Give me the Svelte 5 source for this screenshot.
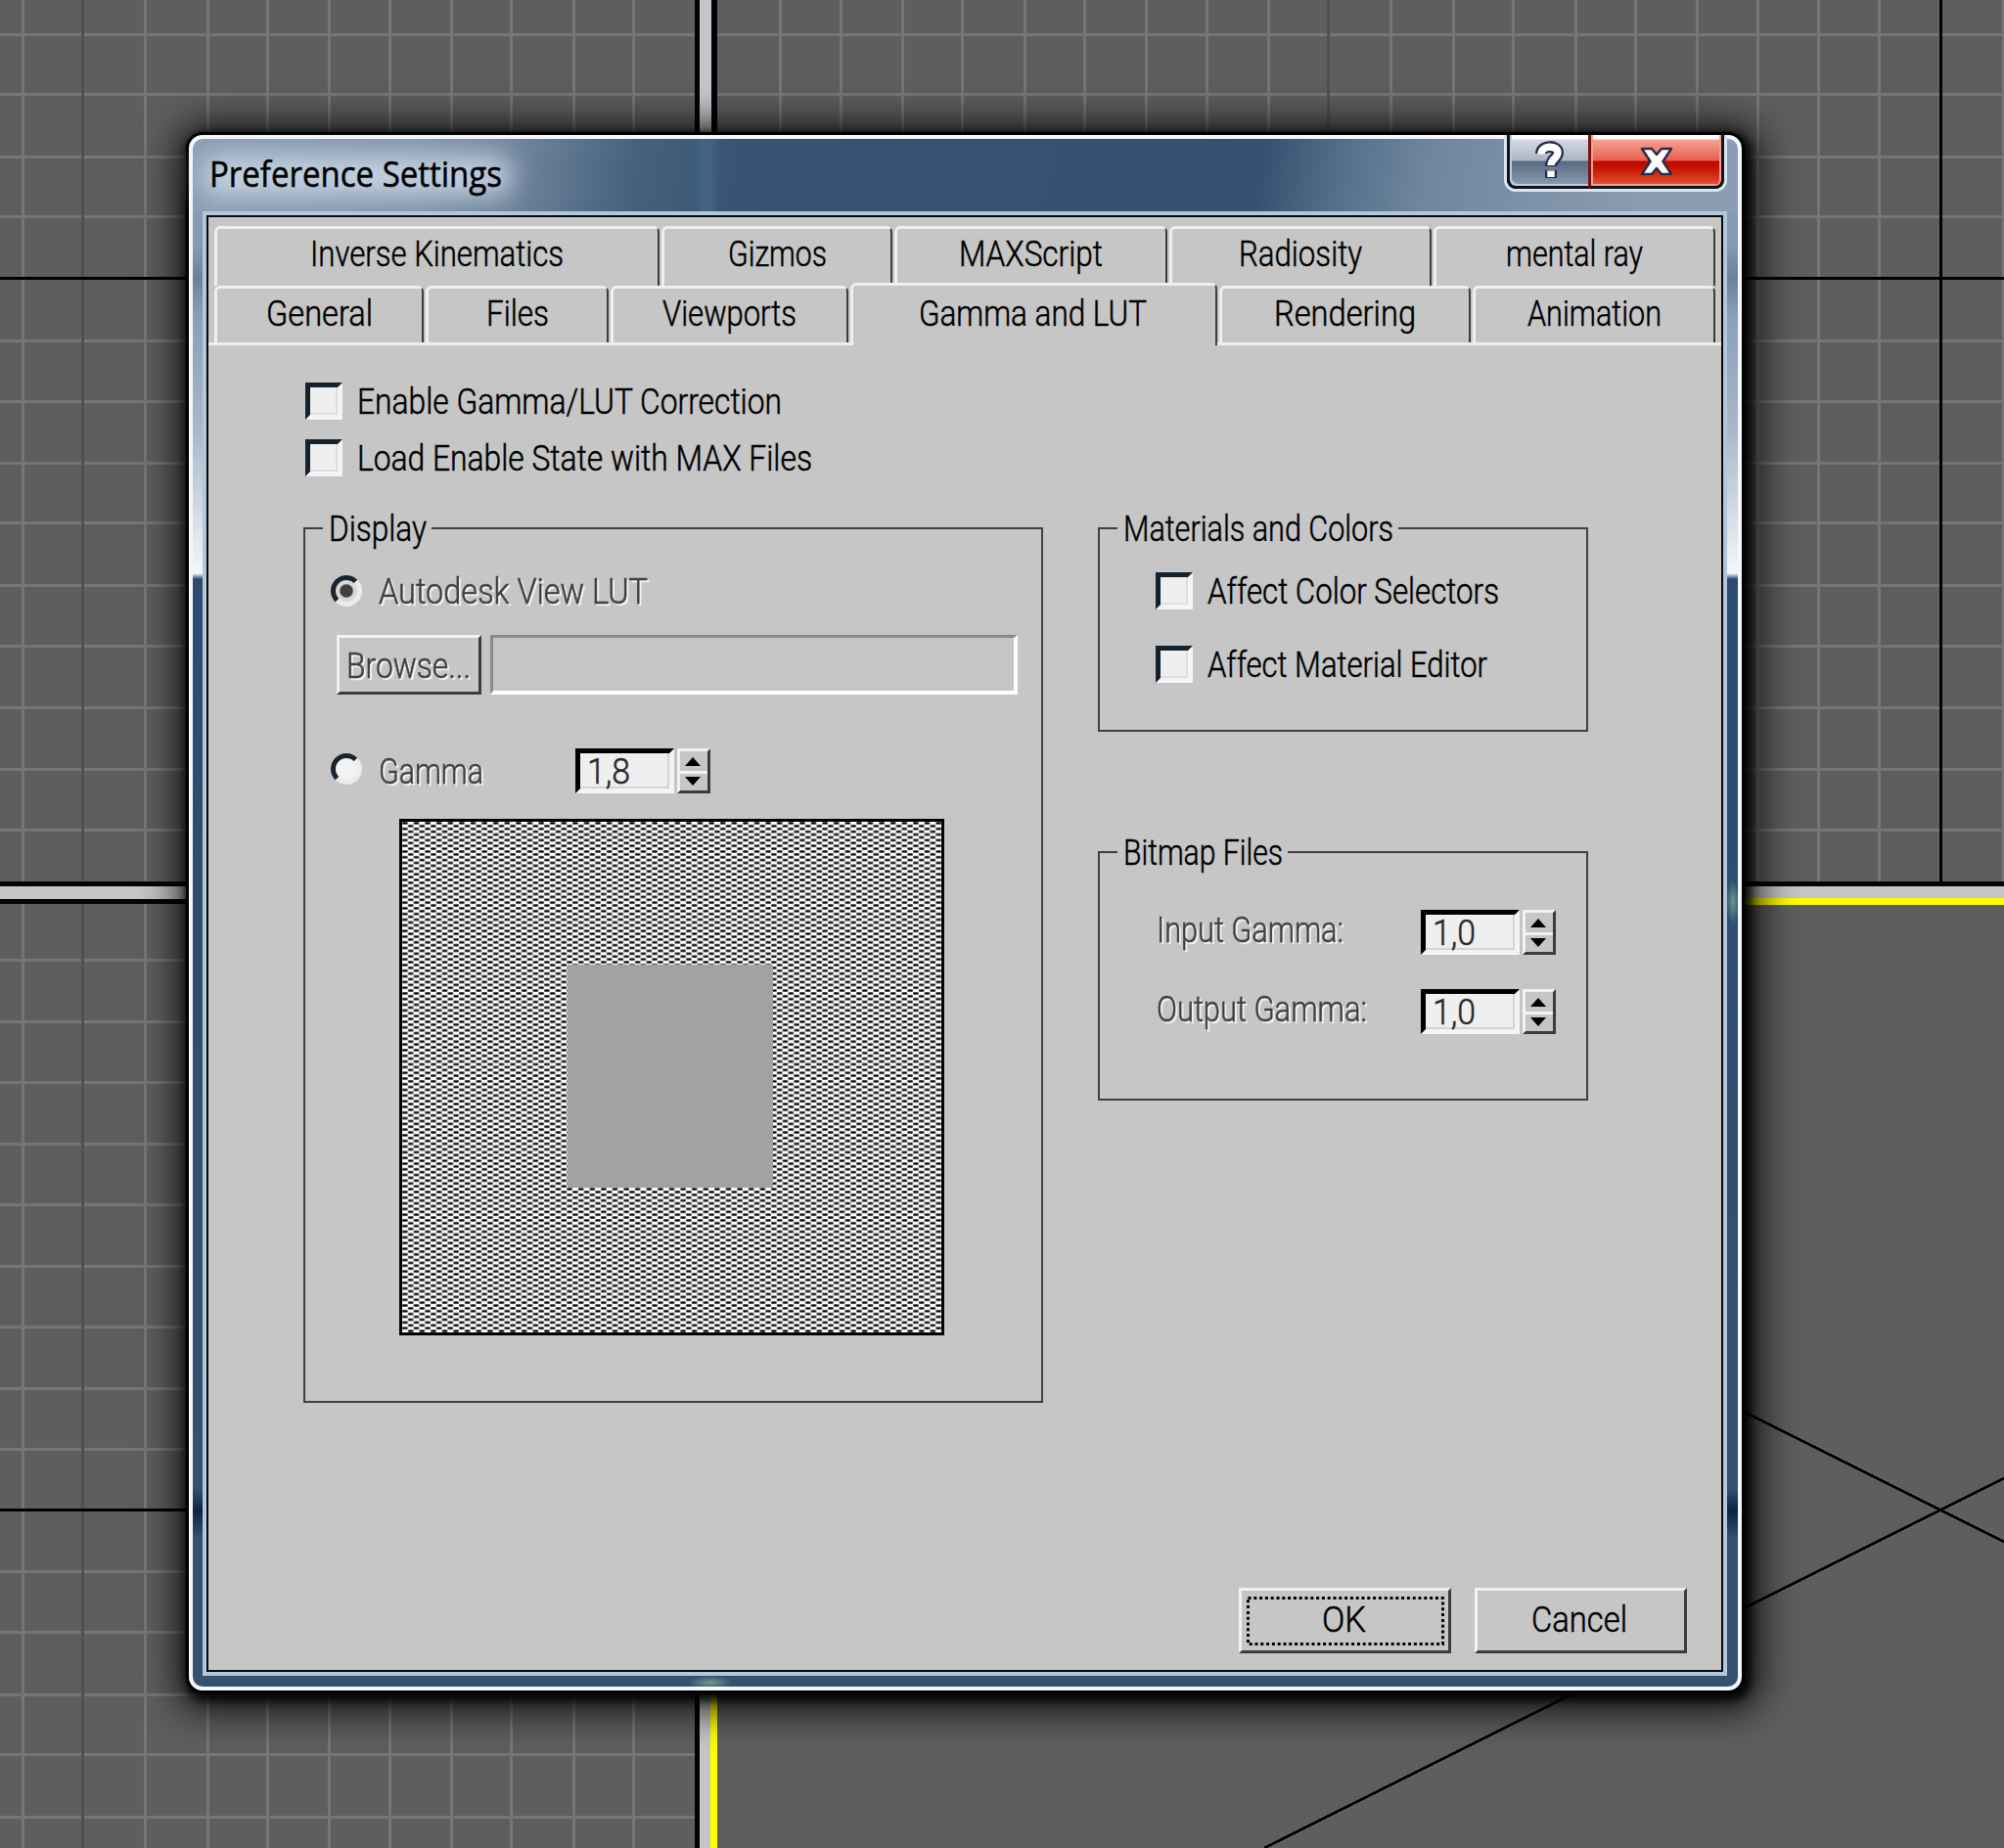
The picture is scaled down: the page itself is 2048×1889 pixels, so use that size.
<script>
    // grid lines of the orthographic viewports behind the dialog
    const gridX = [22, 147, 211, 272, 335, 397, 460, 521, 585, 646, 796, 858, 921, 982, 1046, 1107, 1170, 1232, 1295, 1420, 1484, 1545, 1609, 1670, 1733, 1795, 1857, 1919, 2046];
    const gridTop = [34, 95, 159, 220, 347, 409, 472, 533, 597, 659, 722, 785, 847];
    const gridBottom = [980, 1043, 1105, 1168, 1230, 1293, 1355, 1418, 1480, 1605, 1667, 1731, 1792, 1856];

    const backTabs = [
        { name: 'Inverse Kinematics', width: 455, text: 259 },
        { name: 'Gizmos', width: 236, text: 101 },
        { name: 'MAXScript', width: 279, text: 147 },
        { name: 'Radiosity', width: 268, text: 126 },
        { name: 'mental ray', width: 288, text: 140 },
    ];

    const frontTabs = [
        { name: 'General', width: 214, text: 109 },
        { name: 'Files', width: 187, text: 64 },
        { name: 'Viewports', width: 243, text: 137 },
        { name: 'Gamma and LUT', width: 375, text: 233 },
        { name: 'Rendering', width: 257, text: 145 },
        { name: 'Animation', width: 248, text: 137 },
    ];

    let activeTab = $state('Gamma and LUT');
    let display = $state('lut');
</script>

{#snippet label(text, width)}
    <svg class="label" {width} height="32">
        <text x="0" y="28.500" textLength={width} lengthAdjust="spacingAndGlyphs">{text}</text>
    </svg>
{/snippet}

{#snippet spinner(value)}
    <div class="spinner">
        <div class="number">{@render label(value, 44)}</div>
        <div class="arrows">
            <div class="arrow">
                <svg width="16" height="9"><path d="M8 0L16 9H0Z" /></svg>
            </div>
            <div class="arrow down">
                <svg width="16" height="9"><path d="M0 0H16L8 9Z" /></svg>
            </div>
        </div>
    </div>
{/snippet}

<div class="desktop">
    <svg class="viewports" width="2048" height="1889" shape-rendering="crispEdges">
        <rect width="2048" height="1889" fill="#5e5e5e" />
        {#each gridTop as y}
            <rect x="0" {y} width="2048" height="3" fill="#767676" />
        {/each}
        {#each gridBottom as y}
            <rect x="0" {y} width="710" height="3" fill="#767676" />
        {/each}
        {#each gridX as x}
            <rect {x} y="0" width="3" height={x < 710 ? 1889 : 904} fill="#767676" />
        {/each}
        <rect x="83" y="0" width="3" height="1889" fill="#505050" />
        <rect x="1356" y="0" width="3" height="904" fill="#505050" />
        <rect x="0" y="283" width="2048" height="3" />
        <rect x="0" y="1542" width="710" height="3" />
        <rect x="1982" y="0" width="3" height="904" />

        <path d="M2048 1511L1292 1889M1740 1422L2048 1576" stroke="#000" stroke-width="2.6" />

        <rect x="710" y="0" width="23" height="1889" fill="#00020a" />
        <rect x="0" y="901" width="2048" height="23" fill="#00020a" />
        <rect x="715" y="0" width="12" height="1889" fill="#c6c6c6" />
        <rect x="0" y="906" width="2048" height="13" fill="#c6c6c6" />
        <rect x="726" y="918" width="1322" height="7" fill="#ff0" />
        <rect x="726" y="918" width="7" height="971" fill="#ff0" />
    </svg>

    <div class="dialog">
        <header>
            <div class="title">
                <svg class="label" width="300" height="34">
                    <text x="0" y="29" textLength="299" lengthAdjust="spacingAndGlyphs">Preference Settings</text>
                </svg>
            </div>
            <div class="caption-buttons">
                <button class="help" aria-label="Help">
                    <svg width="30" height="40" viewBox="0 0 30 40">
                        <path class="outline" d="M7 13C7 4 24 4 24 12C24 18 17 18 17 26M17 30V38" />
                        <path class="glyph" d="M7 13.500C7 4 24 4 24 12C24 18 17 18 17 25M17 30.500V37" />
                    </svg>
                </button>
                <button class="close" aria-label="Close">
                    <svg width="36" height="30" viewBox="0 0 36 30">
                        <path class="shape" d="M3 3H13L18 9L23 3H33L24.500 16L33 29H23L18 23L13 29H3L11.500 16Z" />
                    </svg>
                </button>
            </div>
        </header>

        <div class="client">
            <div class="tabs">
                {#each backTabs as tab}
                    <button class="tab" style="width: {tab.width}px">{@render label(tab.name, tab.text)}</button>
                {/each}
            </div>
            <div class="tabs front">
                {#each frontTabs as tab}
                    <button class="tab" class:active={tab.name === activeTab} style="width: {tab.width}px" onclick={() => activeTab = tab.name}>{@render label(tab.name, tab.text)}</button>
                {/each}
            </div>

            <div class="page">
                <div class="options">
                    <div class="option"><span class="checkbox"></span>{@render label('Enable Gamma/LUT Correction', 434)}</div>
                    <div class="option"><span class="checkbox"></span>{@render label('Load Enable State with MAX Files', 465)}</div>
                </div>

                <div class="groups">
                    <fieldset class="display">
                        <legend>{@render label('Display', 100)}</legend>

                        <div class="radio disabled">
                            <span class="dot" class:checked={display === 'lut'}></span>
                            {@render label('Autodesk View LUT', 275)}
                        </div>

                        <div class="browse">
                            <button class="push disabled">{@render label('Browse...', 127)}</button>
                            <div class="path"></div>
                        </div>

                        <div class="gamma">
                            <div class="radio disabled">
                                <span class="dot" class:checked={display === 'gamma'}></span>
                                {@render label('Gamma', 107)}
                            </div>
                            {@render spinner('1,8')}
                        </div>

                        <div class="swatch">
                            <svg width="551" height="522">
                                <defs>
                                    <pattern id="dither" width="11.6" height="5.8" patternUnits="userSpaceOnUse">
                                        <rect width="11.6" height="5.8" fill="#fff" />
                                        <rect x="0.3" y="0.3" width="5.200" height="2.300" />
                                        <rect x="6.100" y="3.200" width="5.200" height="2.300" />
                                    </pattern>
                                </defs>
                                <rect width="551" height="522" fill="url(#dither)" />
                                <rect x="169" y="146" width="210" height="228" fill="#a2a2a2" />
                            </svg>
                        </div>
                    </fieldset>

                    <div class="column">
                        <fieldset class="materials">
                            <legend>{@render label('Materials and Colors', 276)}</legend>
                            <div class="option"><span class="checkbox"></span>{@render label('Affect Color Selectors', 298)}</div>
                            <div class="option"><span class="checkbox"></span>{@render label('Affect Material Editor', 286)}</div>
                        </fieldset>

                        <fieldset class="bitmap">
                            <legend>{@render label('Bitmap Files', 163)}</legend>
                            <div class="row disabled">
                                {@render label('Input Gamma:', 191)}
                                {@render spinner('1,0')}
                            </div>
                            <div class="row disabled">
                                {@render label('Output Gamma:', 215)}
                                {@render spinner('1,0')}
                            </div>
                        </fieldset>
                    </div>
                </div>
            </div>

            <footer>
                <button class="push default">
                    <svg class="focus" width="202" height="50"><rect x="1.500" y="1.500" width="199" height="47" /></svg>
                    {@render label('OK', 45)}
                </button>
                <button class="push">{@render label('Cancel', 98)}</button>
            </footer>
        </div>
    </div>
</div>

<style>
    :global(body) {
        margin: 0;
        overflow: hidden;
    }

    .desktop {
        position: relative;
        width: 2048px;
        height: 1889px;
        overflow: hidden;

        font-family: Roboto, "Liberation Sans", sans-serif;
        font-size: 36px;
        font-weight: 300;
    }

    .desktop * {
        box-sizing: border-box;
    }

    svg {
        display: block;
        flex: none;
    }

    .label {
        overflow: visible;
    }

    .label text {
        fill: #000;
        stroke: #000;
        stroke-width: 0.5;
    }

    button {
        padding: 0;
        border: none;
        border-radius: 0;
        background: none;
        font: inherit;
    }

    .dialog {
        position: absolute;
        left: 193px;
        top: 138px;
        width: 1587px;
        height: 1590px;

        border: 4px solid #f4f8fc;
        border-radius: 14px;
        background:
            radial-gradient(closest-side, #6d978c, #6d978c00) 1567px 757px / 14px 46px no-repeat,
            radial-gradient(closest-side, #6d978c, #6d978c00) 506px 1571px / 46px 14px no-repeat,
            linear-gradient(90deg, #41638400, #416384 8px, #416384 16px, #41638400) 512px 0 / 26px 74px no-repeat,
            linear-gradient(100deg, #8a9fb7, #8095ae 230px, #6f849c 330px, #45617d 450px, #365472 560px, #34526f 1080px, #52708c 1160px, #71869e 1250px, #8a9db2 1480px) top / 100% 74px no-repeat,
            linear-gradient(#8a9fb6 0, #8599b0 110px, #6c8098 142px, #8a9fb6 180px, #a9b8c9 300px, #eef3f7 435px, #f4f7fa 444px, #2b4c70 450px, #34516f 1380px, #0d2440 1402px, #34516f 1430px);
        box-shadow: 0 0 0 3px #000, 3px 4px 10px 6px rgba(0, 0, 0, 0.9), 4px 5px 38px 16px rgba(0, 0, 0, 0.8);
    }

    header {
        display: flex;
        align-items: flex-start;
        justify-content: space-between;
        height: 74px;
    }

    .title {
        position: relative;
        margin: 7px 0 0 2px;
        padding: 13px 24px 12px 15px;

        font-family: "Open Sans", "Noto Sans", sans-serif;
        font-weight: 400;
    }

    /* glow that keeps the caption readable on the glass */
    .title::before {
        content: "";
        position: absolute;
        inset: 10px 14px 8px 6px;
        border-radius: 20px;
        background: rgba(208, 219, 231, 0.85);
        filter: blur(13px);
    }

    .title .label {
        position: relative;
    }

    .caption-buttons {
        display: flex;
        height: 58px;
        margin: -4px 11px 0 0;

        border: 3px solid #dce6f0;
        border-top: none;
        border-radius: 0 0 12px 12px;
        background: #111;
    }

    .caption-buttons button {
        display: flex;
        align-items: center;
        justify-content: center;
        height: 55px;

        border: 3px solid #10131a;
        border-top: none;
    }

    .caption-buttons .help {
        width: 83px;
        border-right: none;
        border-radius: 0 0 0 9px;
        background: linear-gradient(#fff 0, #fff 4px, #d3dae3 5px, #aab5c2 26px, #566a80 27px, #6e8098 38px, #8b9bb5 52px);
        box-shadow: inset 2px -2px 0 #c3cdda;
    }

    .caption-buttons .close {
        width: 139px;
        border-left-color: #7a1410;
        border-radius: 0 0 9px 0;
        background: linear-gradient(#fff 0, #fff 4px, #f9a093 5px, #e5604f 26px, #bd0800 27px, #c81400 34px, #e0553a 52px);
        box-shadow: inset 2px -2px 0 #f0a090, inset -2px 0 0 #f0a090;
    }

    .outline {
        fill: none;
        stroke: #262c48;
        stroke-width: 12;
    }

    .glyph {
        fill: none;
        stroke: #fff;
        stroke-width: 7.5;
    }

    .shape {
        fill: #fff;
        stroke: #2c2c48;
        stroke-width: 2.5;
        stroke-linejoin: round;
    }

    .client {
        display: flex;
        flex-direction: column;
        width: 1550px;
        height: 1489px;
        margin: 4px 0 0 14px;

        border: 2px solid #05080c;
        background: #c6c6c6;
        box-shadow: 0 0 0 4px #b4c6da;
    }

    .tabs {
        display: flex;
        gap: 2px;
        padding: 9px 6px 0;
    }

    .tab {
        display: flex;
        justify-content: center;
        height: 61px;
        padding: 9px 1px 0 0;

        border-top: 3px solid #efefef;
        border-left: 3px solid #efefef;
        border-right: 2px solid #3c3c3c;
        border-radius: 6px 6px 0 0;
        background: #c6c6c6;
    }

    .tabs.front {
        height: 61px;
        padding-top: 0;
        border-bottom: 3px solid #efefef;
    }

    .front .tab {
        height: 58px;
    }

    .front .tab.active {
        z-index: 1;
        height: 64px;
        margin-top: -3px;
        padding: 12px 4px 0 0;
    }

    .page {
        padding: 38px 0 0 97px;
    }

    .options {
        display: flex;
        flex-direction: column;
        gap: 20px;
        padding-left: 2px;
    }

    .option {
        display: flex;
        align-items: center;
        gap: 15px;
        height: 38px;
    }

    .checkbox {
        width: 38px;
        height: 38px;

        border: 5px solid #15222e;
        border-color: #15222e #f4f4f4 #f4f4f4 #15222e;
        background: #efefef;
        box-shadow: inset -2px -2px 0 #dedede;
    }

    .groups {
        display: flex;
        gap: 56px;
        margin-top: 37px;
    }

    fieldset {
        min-width: 0;
        margin: 0;
        padding: 0;
        border: 2px solid #404040;
    }

    legend {
        margin-left: 18px;
        padding: 0 5px 0 6px;
    }

    .display {
        width: 756px;
        height: 910px;
    }

    .radio {
        display: flex;
        align-items: center;
        gap: 17px;
        width: 250px;
    }

    .display > .radio {
        margin: 32px 0 0 26px;
    }

    .dot {
        flex: none;
        width: 32px;
        height: 32px;

        border: 5px solid #182430;
        border-color: #182430 #ececec #ececec #182430;
        border-radius: 50%;
        background: #f2f2f2;
    }

    .dot.checked {
        background: radial-gradient(circle, #404040 6px, #d8d8d8 7.5px);
    }

    .disabled > .label text {
        fill: #404040;
        stroke: #404040;
        filter: drop-shadow(2.5px 2.5px 0 #f0f0f0);
    }

    .browse {
        display: flex;
        gap: 9px;
        margin: 29px 0 0 32px;
    }

    .push {
        display: flex;
        align-items: center;
        justify-content: center;
        width: 217px;
        height: 67px;
        padding: 0 3px 4px 0;

        border: 3px solid #f2f2f2;
        border-right-color: #3c3c3c;
        border-bottom-color: #3c3c3c;
    }

    .browse .push {
        width: 148px;
        height: 61px;
        padding: 0 2px 0 0;
    }

    .path {
        width: 539px;
        height: 61px;

        border: 3px solid #8a8a8a;
        border-right: 4px solid #fff;
        border-bottom: 4px solid #fff;
    }

    .gamma {
        display: flex;
        align-items: center;
        margin: 55px 0 0 26px;
    }

    .gamma .dot {
        margin-bottom: 4px;
    }

    .gamma .radio .label {
        margin-bottom: 1px;
    }

    .spinner {
        display: flex;
        gap: 3px;
    }

    .number {
        display: flex;
        align-items: center;
        width: 101px;
        height: 46px;
        padding: 0 0 1px 7px;

        border: 5px solid #000;
        border-right-color: #f4f4f4;
        border-bottom-color: #f4f4f4;
        background: #efefef;
        box-shadow: inset -2px -2px 0 #d4d4d4;
    }

    .number .label text {
        fill: #282828;
        stroke: #282828;
    }

    .arrows {
        width: 34px;
        height: 46px;

        border: 3px solid #f2f2f2;
        border-right-color: #3c3c3c;
        border-bottom-color: #3c3c3c;
    }

    .arrow {
        display: flex;
        align-items: center;
        justify-content: center;
        height: 20px;
        padding: 0 2px 0 0;
    }

    .arrow.down {
        padding: 0 2px 3px 0;
        border-top: 3px solid #f2f2f2;
    }

    .swatch {
        width: 557px;
        height: 528px;
        margin: 26px 0 0 96px;
        border: 3px solid #000;
    }

    .column {
        display: flex;
        flex-direction: column;
        gap: 107px;
        width: 501px;
    }

    .materials {
        height: 224px;
    }

    .materials .option {
        margin: 29px 0 0 57px;
    }

    .materials .option + .option {
        margin-top: 37px;
    }

    .bitmap {
        height: 270px;
    }

    .row {
        display: flex;
        align-items: center;
        justify-content: space-between;
        margin: 43px 31px 0 58px;
    }

    .row + .row {
        margin-top: 35px;
    }

    .row > .label {
        margin-bottom: 6px;
    }

    footer {
        display: flex;
        justify-content: flex-end;
        gap: 24px;
        margin-top: auto;
        padding: 0 35px 17px 0;
    }

    .default {
        position: relative;
    }

    .focus {
        position: absolute;
        left: 5px;
        top: 6px;

        fill: none;
        stroke: #000;
        stroke-width: 3;
        stroke-dasharray: 3 2.8;
    }
</style>
